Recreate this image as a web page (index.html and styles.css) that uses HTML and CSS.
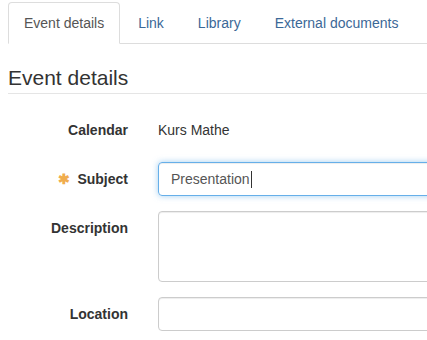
FILE: index.html
```html
<!DOCTYPE html>
<html>
<head>
<meta charset="utf-8">
<link rel="stylesheet" href="styles.css">
</head>
<body>
<div class="page">
  <ul class="tabs">
    <li class="tab active">Event details</li>
    <li class="tab">Link</li>
    <li class="tab">Library</li>
    <li class="tab">External documents</li>
  </ul>
  <form class="form">
    <div class="legend">Event details</div>
    <div class="row">
      <div class="label">Calendar</div>
      <div class="static">Kurs Mathe</div>
    </div>
    <div class="row">
      <div class="label"><span class="req">✱</span>Subject</div>
      <div class="input focus"><span class="value">Presentation</span><span class="caret"></span></div>
    </div>
    <div class="row">
      <div class="label">Description</div>
      <div class="input textarea"></div>
    </div>
    <div class="row">
      <div class="label">Location</div>
      <div class="input"></div>
    </div>
  </form>
</div>
</body>
</html>
```

FILE: styles.css
```css
html, body {
  margin: 0;
  padding: 0;
  background: #fff;
  overflow: hidden;
}
body {
  font-family: "Liberation Sans", Arial, sans-serif;
  font-size: 14px;
  line-height: 20px;
  color: #333;
}
.page {
  padding: 2px 0 0 8px;
  width: 560px;
}
.tabs {
  list-style: none;
  margin: 0;
  padding: 0;
  display: flex;
  border-bottom: 1px solid #ddd;
}
.tab {
  padding: 10px 15px;
  margin-right: 2px;
  margin-bottom: -1px;
  color: #3b6897;
  border: 1px solid transparent;
  border-radius: 4px 4px 0 0;
}
.tab.active {
  color: #555;
  background: #fff;
  border-color: #ddd;
  border-bottom-color: #fff;
}
.form {
  margin-top: 19px;
}
.legend {
  font-size: 21px;
  line-height: 30px;
  color: #333;
  border-bottom: 1px solid #e5e5e5;
  margin-bottom: 19px;
}
.row {
  display: grid;
  grid-template-columns: 120px 1fr;
  column-gap: 30px;
  margin-bottom: 15px;
}
.label {
  text-align: right;
  font-weight: bold;
  padding-top: 7px;
  display: flex;
  justify-content: flex-end;
  align-items: flex-start;
}
.req {
  color: #f0ad4e;
  font-weight: bold;
  font-size: 14px;
  margin-right: 7px;
}
.static {
  padding-top: 7px;
  min-height: 27px;
}
.input {
  height: 34px;
  box-sizing: border-box;
  border: 1px solid #ccc;
  border-radius: 4px;
  padding: 6px 12px;
  display: flex;
  align-items: center;
  box-shadow: inset 0 1px 1px rgba(0,0,0,0.075);
}
.input.focus {
  border-color: #66afe9;
  box-shadow: inset 0 1px 1px rgba(0,0,0,0.075), 0 0 6px rgba(102,175,233,0.6);
  color: #555;
}
.textarea {
  height: 71px;
}
.caret {
  display: inline-block;
  width: 1px;
  height: 17px;
  background: #333;
  margin-left: 1px;
}
```
